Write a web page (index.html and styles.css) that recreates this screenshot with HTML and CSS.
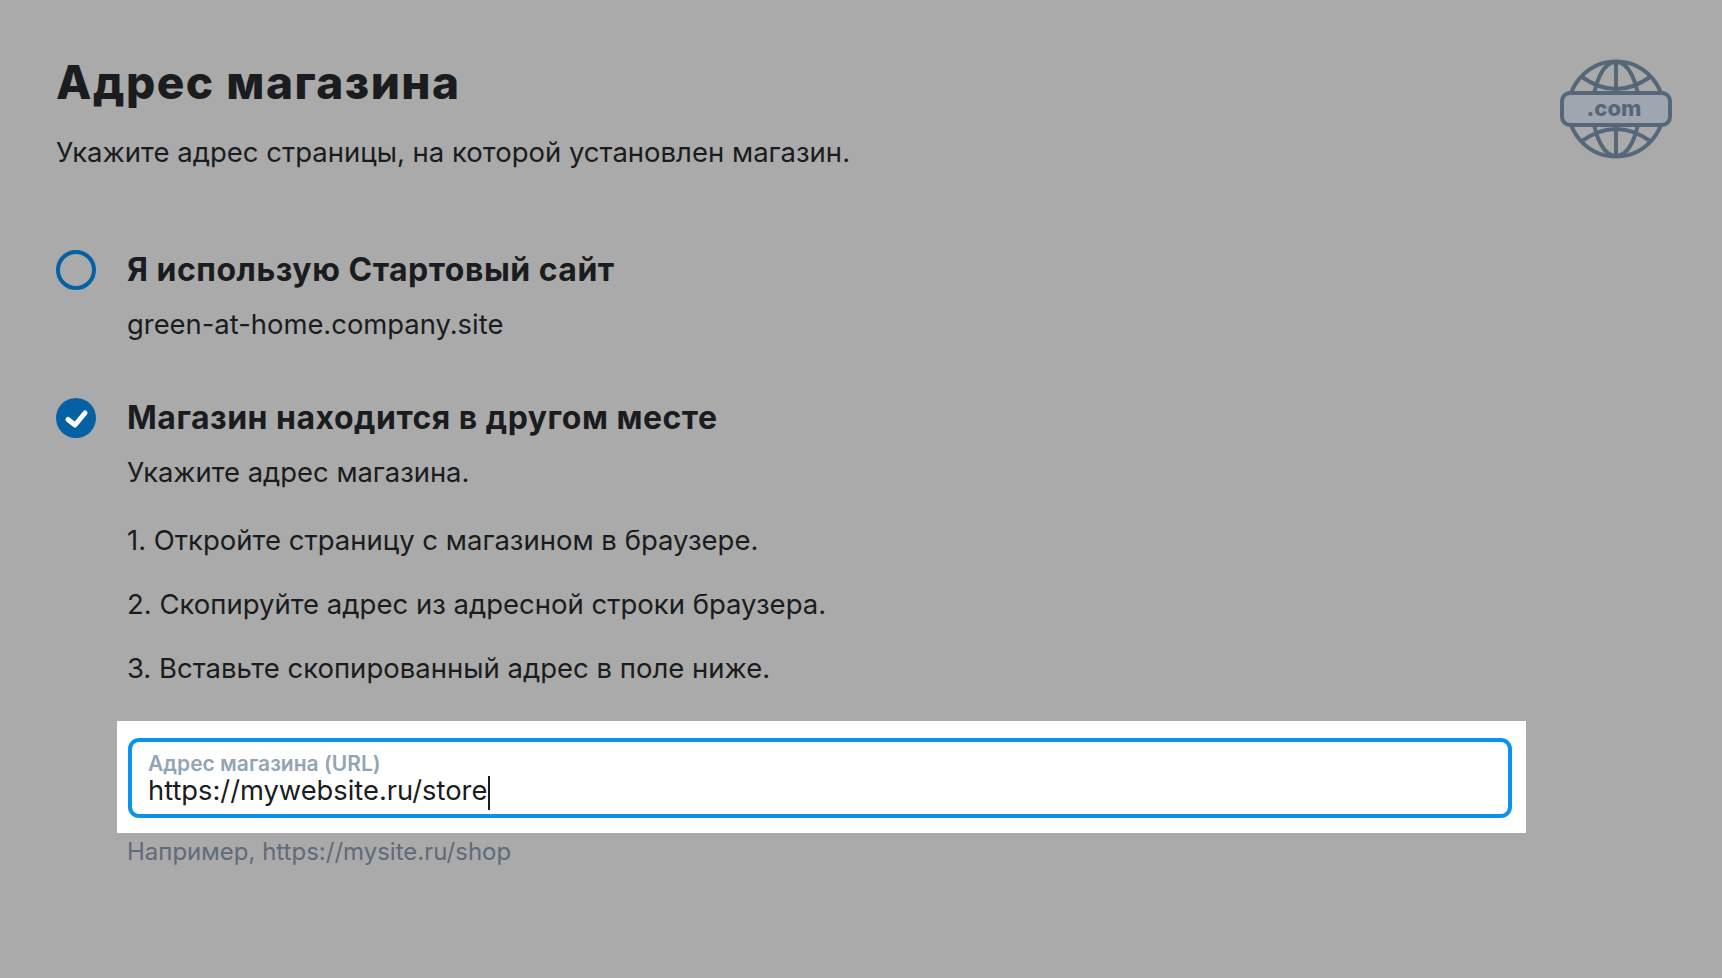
FILE: index.html
```html
<!DOCTYPE html>
<html lang="ru">
<head>
	<meta http-equiv="Content-Type" content="text/html; charset=UTF-8">
	<meta name="viewport" content="width=device-width, initial-scale=1">
	<title>Адрес магазина</title>
	<link rel="stylesheet" href="styles.css">
</head>
<body>
<main class="page">
	<header class="head">
		<div class="head-text">
			<h1 class="title">Адрес магазина</h1>
			<p class="subtitle">Укажите адрес страницы, на которой установлен магазин.</p>
		</div>
		<svg class="globe" width="112" height="100" viewBox="0 0 112 100" fill="none" stroke="#56677a" stroke-width="4">
			<circle cx="56" cy="50" r="47.500"/>
			<path d="M56 3V97"/>
			<ellipse cx="56" cy="50" rx="23" ry="47"/>
			<path d="M22 18Q56 42 90 18"/>
			<path d="M22 82Q56 58 90 82"/>
			<rect class="globe-pill" x="2" y="34" width="108" height="32" rx="8"/>
			<text class="globe-text" x="54" y="57" text-anchor="middle">.com</text>
		</svg>
	</header>

	<section class="option option-first">
		<span class="radio"></span>
		<div class="option-body">
			<h2 class="option-title">Я использую Стартовый сайт</h2>
			<p class="option-line">green-at-home.company.site</p>
		</div>
	</section>

	<section class="option option-second">
		<span class="radio radio-on">
			<svg width="40" height="40" viewBox="0 0 40 40" fill="none" stroke="#fff" stroke-width="5" stroke-linecap="round" stroke-linejoin="round">
				<path d="M12 21.500L19 27L29 15"/>
			</svg>
		</span>
		<div class="option-body">
			<h2 class="option-title">Магазин находится в другом месте</h2>
			<p class="option-line">Укажите адрес магазина.</p>
			<ol class="steps">
				<li>1. Откройте страницу с магазином в браузере.</li>
				<li>2. Скопируйте адрес из адресной строки браузера.</li>
				<li>3. Вставьте скопированный адрес в поле ниже.</li>
			</ol>
			<div class="field-wrap">
				<div class="field">
					<span class="field-label">Адрес магазина (URL)</span>
					<span class="field-value">https://mywebsite.ru/store<span class="caret"></span></span>
				</div>
			</div>
			<p class="hint">Например, https://mysite.ru/shop</p>
		</div>
	</section>
</main>
</body>
</html>
```

FILE: styles.css
```css
html,
body {
  width: 100%;
  height: 100%;
}
body {
  margin: 0;
  background-color: #aaa;
  color: #1a1c20;
  font-family: Inter, "Noto Sans", sans-serif;
  overflow: hidden;
}
h1, h2, p, ol {
  margin: 0;
  padding: 0;
}
.page {
  padding: 52px 50px 0 56px;
}
.head {
  display: flex;
  justify-content: space-between;
  align-items: flex-start;
}
.title {
  font-size: 46px;
  line-height: 60px;
  font-weight: 800;
  letter-spacing: 1.5px;
}
.subtitle {
  margin-top: 24px;
  font-size: 27.5px;
  line-height: 32px;
}
.globe {
  margin-top: 7px;
}
.globe-pill {
  fill: #a0a6b0;
}
.globe-text {
  fill: #56677a;
  stroke: none;
  font-size: 22px;
  font-weight: 800;
}
.option {
  display: flex;
  gap: 31px;
}
.option-first {
  margin-top: 82px;
}
.option-second {
  margin-top: 58px;
}
.radio {
  flex: none;
  width: 40px;
  height: 40px;
  box-sizing: border-box;
  border: 4px solid #0461a6;
  border-radius: 50%;
}
.radio-on {
  background-color: #0461a6;
  border: 0;
}
.option-title {
  font-size: 32px;
  line-height: 40px;
  font-weight: 700;
  letter-spacing: 0.5px;
}
.option-line {
  margin-top: 18px;
  font-size: 27.4px;
  line-height: 32px;
}
.steps {
  list-style: none;
  margin-top: 36px;
}
.steps li {
  margin-top: 32px;
  font-size: 27.5px;
  line-height: 32px;
}
.steps li:first-child {
  margin-top: 0;
}
.field-wrap {
  margin: 37px 0 0 -10px;
  width: 1409px;
  box-sizing: border-box;
  padding: 17px 14px 15px 11px;
  background-color: #fff;
}
.field {
  box-sizing: border-box;
  height: 80px;
  border: 4px solid #0a93ee;
  border-radius: 11px;
  padding: 10px 16px;
}
.field-label {
  display: block;
  font-size: 21px;
  line-height: 24px;
  font-weight: 600;
  color: #93a5b5;
}
.field-value {
  display: block;
  font-size: 27.3px;
  line-height: 30px;
}
.caret {
  display: inline-block;
  width: 2px;
  height: 34px;
  margin-left: 1px;
  vertical-align: top;
  background-color: #1a1c20;
}
.hint {
  margin-top: 4px;
  font-size: 24px;
  line-height: 30px;
  color: #5f6b78;
}
```
